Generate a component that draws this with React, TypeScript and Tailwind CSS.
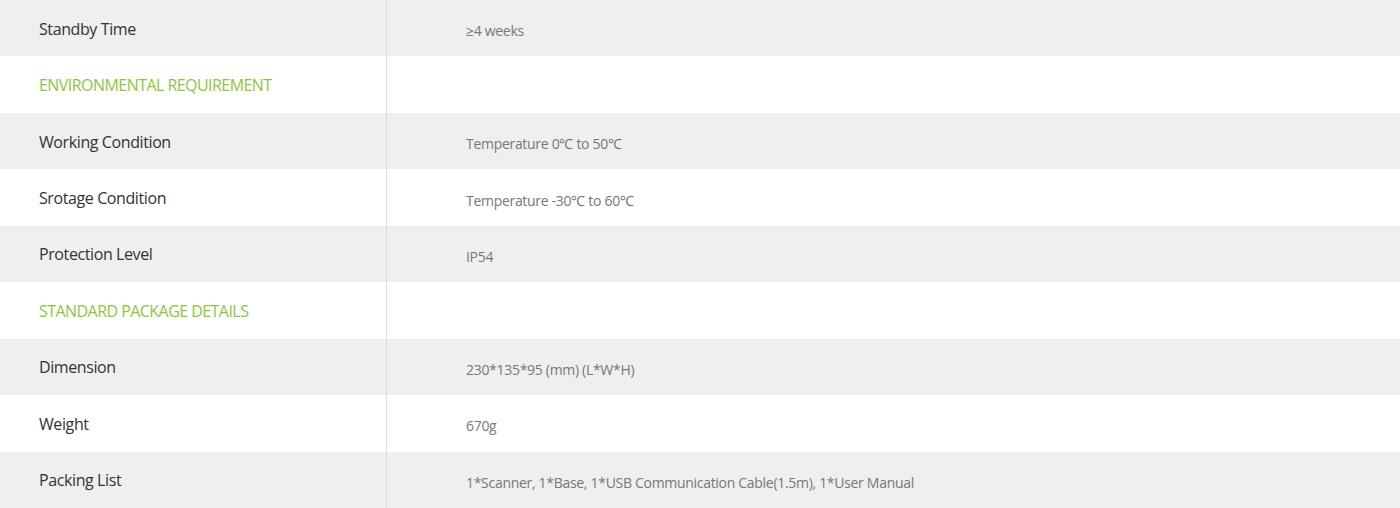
const rows: { label: string; value?: string; section?: boolean }[] = [
  { label: "Standby Time", value: "≥4 weeks" },
  { label: "ENVIRONMENTAL REQUIREMENT", section: true },
  { label: "Working Condition", value: "Temperature 0℃ to 50℃" },
  { label: "Srotage Condition", value: "Temperature -30℃ to 60℃" },
  { label: "Protection Level", value: "IP54" },
  { label: "STANDARD PACKAGE DETAILS", section: true },
  { label: "Dimension", value: "230*135*95 (mm) (L*W*H)" },
  { label: "Weight", value: "670g" },
  { label: "Packing List", value: "1*Scanner, 1*Base, 1*USB Communication Cable(1.5m), 1*User Manual" },
];

export default function App() {
  return (
    <div className="w-[1400px] h-[508px] overflow-hidden bg-white font-['Open_Sans',sans-serif]">
      {rows.map((row, i) => (
        <div
          key={row.label}
          className={`flex h-[56.45px] ${i % 2 === 0 ? "bg-[#efefef]" : "bg-white"}`}
        >
          <div className="w-[387px] border-r border-[#dcdcdc] flex items-center pl-[39px] pt-[1px]">
            <span
              className={
                row.section
                  ? "text-[16px] tracking-[-0.55px] text-[#8cc63e]"
                  : "text-[16px] tracking-[-0.4px] text-[#333333]"
              }
            >
              {row.label}
            </span>
          </div>
          <div className="flex-1 flex items-center pl-[79px] pt-[5px]">
            {row.value && (
              <span className="text-[14px] tracking-[-0.3px] text-[#777777]">{row.value}</span>
            )}
          </div>
        </div>
      ))}
    </div>
  );
}
